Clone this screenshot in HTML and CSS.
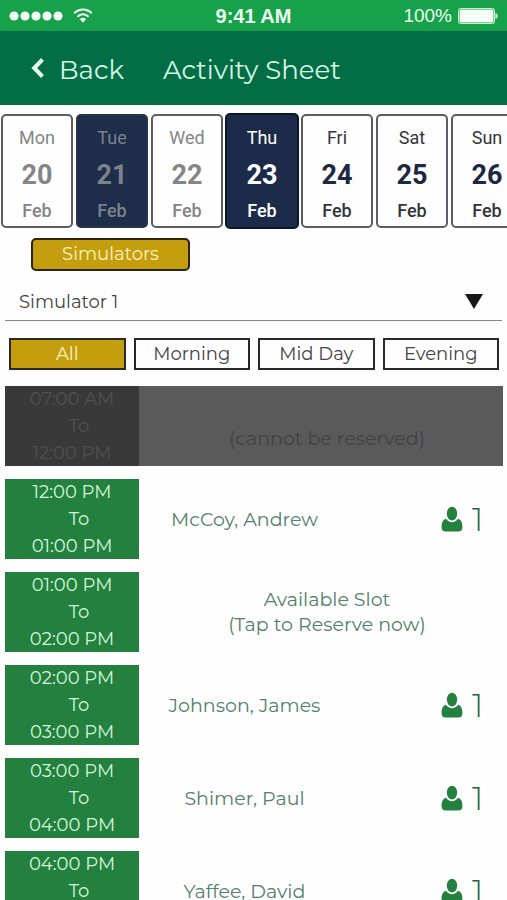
FILE: index.html
```html
<!DOCTYPE html>
<html lang="en">
<head>
<meta charset="utf-8">
<meta name="viewport" content="width=device-width, initial-scale=1">
<title>Activity Sheet</title>
<link rel="stylesheet" href="styles.css">
</head>
<body>
<svg class="defs" aria-hidden="true">
  <symbol id="person" viewBox="0 0 22 26">
    <ellipse cx="11" cy="7.6" rx="5.2" ry="6.9"/>
    <path d="M5 12.8C8 17.4 14 17.4 17 12.8C20.3 13.7 21.4 16.8 21.4 21.2C21.4 24 20 25.4 17.6 25.4H4.4C2 25.4 .6 24 .6 21.2C.6 16.8 1.7 13.7 5 12.8Z"/>
  </symbol>
</svg>
<div class="status">
  <div class="signal">
    <svg class="dots" viewBox="0 0 54 10" aria-hidden="true"><circle cx="5" cy="5" r="4.6"/><circle cx="16" cy="5" r="4.6"/><circle cx="27" cy="5" r="4.6"/><circle cx="38" cy="5" r="4.6"/><circle cx="49" cy="5" r="4.6"/></svg>
    <svg class="wifi" viewBox="0 0 20 15" aria-hidden="true"><path class="arc" d="M1.2 5.3C6.2 .1 13.8 .1 18.8 5.3M4.5 8.7C7.6 5.5 12.4 5.5 15.5 8.7"/><path d="M6.8 11.2C8.6 9.4 11.4 9.4 13.2 11.2L10 14.6Z"/></svg>
  </div>
  <strong class="clock">9:41 AM</strong>
  <div class="power">
    <span>100%</span>
    <svg class="battery" viewBox="0 0 40 16" aria-hidden="true"><rect class="case" x=".5" y=".5" width="36" height="15" rx="2"/><rect x="1.5" y="1.5" width="34" height="13" rx="1"/><path d="M37.5 5C40.3 6 40.3 10 37.5 11Z"/></svg>
  </div>
</div>
<header class="bar">
  <a class="back" href="#"><svg class="chevron" viewBox="0 0 14 20" aria-hidden="true"><path d="M11.5 1.5L3.2 10L11.5 18.5"/></svg>Back</a>
  <h1 class="title">Activity Sheet</h1>
</header>
<main>
  <nav class="days" aria-label="Day">
    <button class="day past"><span>Mon</span><b>20</b><span class="month">Feb</span></button>
    <button class="day past booked"><span>Tue</span><b>21</b><span class="month">Feb</span></button>
    <button class="day past"><span>Wed</span><b>22</b><span class="month">Feb</span></button>
    <button class="day today" aria-pressed="true"><span>Thu</span><b>23</b><span class="month">Feb</span></button>
    <button class="day"><span>Fri</span><b>24</b><span class="month">Feb</span></button>
    <button class="day"><span>Sat</span><b>25</b><span class="month">Feb</span></button>
    <button class="day"><span>Sun</span><b>26</b><span class="month">Feb</span></button>
  </nav>
  <button class="category">Simulators</button>
  <div class="picker">
    <select aria-label="Simulator"><option>Simulator 1</option></select>
    <svg class="caret" viewBox="0 0 18 15" aria-hidden="true"><path d="M0 0H18L9 15Z"/></svg>
  </div>
  <div class="filters">
    <button class="on" aria-pressed="true">All</button>
    <button>Morning</button>
    <button>Mid Day</button>
    <button>Evening</button>
  </div>
  <ul class="slots">
    <li class="slot closed"><div class="time"><span>07:00 AM</span><span class="to">To</span><span>12:00 PM</span></div><p class="note"><br>(cannot be reserved)</p></li>
    <li class="slot"><div class="time"><span>12:00 PM</span><span class="to">To</span><span>01:00 PM</span></div><p class="name">McCoy, Andrew</p><p class="count"><svg aria-hidden="true"><use href="#person"/></svg>1</p></li>
    <li class="slot"><div class="time"><span>01:00 PM</span><span class="to">To</span><span>02:00 PM</span></div><button class="note">Available Slot<br>(Tap to Reserve now)</button></li>
    <li class="slot"><div class="time"><span>02:00 PM</span><span class="to">To</span><span>03:00 PM</span></div><p class="name">Johnson, James</p><p class="count"><svg aria-hidden="true"><use href="#person"/></svg>1</p></li>
    <li class="slot"><div class="time"><span>03:00 PM</span><span class="to">To</span><span>04:00 PM</span></div><p class="name">Shimer, Paul</p><p class="count"><svg aria-hidden="true"><use href="#person"/></svg>1</p></li>
    <li class="slot"><div class="time"><span>04:00 PM</span><span class="to">To</span><span>05:00 PM</span></div><p class="name">Yaffee, David</p><p class="count"><svg aria-hidden="true"><use href="#person"/></svg>1</p></li>
  </ul>
</main>
</body>
</html>
```
FILE: styles.css
```css
* { box-sizing: border-box; }
body {
  margin: 0;
  height: 100vh;
  overflow: hidden;
  background: #fefefe;
  color: #444;
  font: 18px/27px Montserrat, Inter, sans-serif;
}
button, select { font: inherit; color: inherit; margin: 0; padding: 0; }
p, h1, ul { margin: 0; padding: 0; }
.defs { display: none; }

.status {
  display: grid;
  grid-template-columns: 1fr auto 1fr;
  align-items: center;
  height: 31px;
  padding: 0 9px;
  background: #17a14b;
  color: #ecffef;
  fill: #f4fff5;
  font: 19px/30px "Liberation Sans", sans-serif;
}
.signal, .power { display: flex; align-items: center; }
.signal { gap: 10px; }
.power { justify-content: flex-end; gap: 6px; }
.clock { font-size: 20px; }
.dots { width: 54px; height: 10px; }
.wifi { width: 20px; height: 15px; }
.arc { fill: none; stroke: #f4fff5; stroke-width: 2; }
.battery { width: 40px; height: 16px; }
.case { fill: none; stroke: #c4efce; }

.bar {
  display: flex;
  align-items: center;
  gap: 39px;
  height: 74px;
  padding: 4px 31px 0;
  background: #036d45;
  color: #d5f7e4;
  font-size: 26px;
  line-height: 32px;
}
.back { display: flex; align-items: center; gap: 14px; color: inherit; text-decoration: none; }
.chevron { width: 14px; height: 20px; margin-bottom: 4px; fill: none; stroke: #e6fff1; stroke-width: 4; }
.title { font-size: inherit; font-weight: 400; }

.days {
  display: flex;
  align-items: center;
  gap: 3px;
  padding: 8px 1px 9px 1px;
  overflow: hidden;
  font-family: Roboto, sans-serif;
  line-height: 26px;
}
.day {
  display: flex;
  flex: 0 0 72px;
  flex-direction: column;
  align-items: center;
  justify-content: space-between;
  height: 114px;
  padding: 9px 0 2px;
  border: 2px solid #5b5c64;
  border-radius: 5px;
  background: #fefefe;
  color: #34353b;
}
.day b { color: #1c2840; font-size: 27px; font-weight: 700; }
.day .month { font-weight: 500; }
.day.past, .past b { color: #858585; }
.booked { border-color: #26334d; background: #1e2d4a; }
.day.booked, .booked b { color: #7b828d; }
.today { flex-basis: 74px; margin: 0 -1px; height: 116px; padding: 10px 0 3px; border-color: #0d1729; background: #1b2b49; }
.day.today, .today b { color: #fff; }

.category {
  display: block;
  width: 159px;
  height: 33px;
  margin-left: 31px;
  border: 2px solid #2a2411;
  border-radius: 5px;
  background: #c59e10;
  color: #fff3c0;
}

.picker {
  display: flex;
  align-items: center;
  margin: 11px 5px 0;
  padding: 0 19px 0 14px;
  border-bottom: 1px solid #858585;
}
.picker select { flex: 1; height: 38px; padding-top: 2px; border: 0; background: none; appearance: none; }
.caret { width: 18px; height: 15px; fill: #181818; pointer-events: none; }

.filters {
  display: grid;
  grid-template-columns: repeat(4, 1fr);
  gap: 8px;
  margin: 17px 8px 0 9px;
}
.filters button { height: 32px; border: 2px solid #292929; background: #fefefe; }
.filters .on { background: #c59e10; color: #fff3c0; }

.slots { display: grid; gap: 13px; margin: 16px 4px 0 5px; list-style: none; }
.slot { display: flex; height: 80px; color: #52806a; }
.time {
  display: flex;
  flex: 0 0 134px;
  flex-direction: column;
  align-items: center;
  justify-content: center;
  padding-top: 1px;
  background: #23803f;
  color: #d3f7d9;
}
.to { padding-left: 14px; }
.name, .note { flex: 1; align-self: center; text-align: center; font-size: 19px; }
.note { padding: 0 0 0 12px; border: 0; background: none; line-height: 25px; }
.count {
  display: flex;
  flex: 0 0 153px;
  align-items: center;
  gap: 9px;
  padding-left: 91px;
  color: #246339;
  font-size: 32px;
  font-weight: 300;
}
.count svg { width: 22px; height: 26px; fill: #23803f; }
.closed { background: #5a5a5a; color: #424242; }
.closed .time { background: #393939; color: #505050; }
```
